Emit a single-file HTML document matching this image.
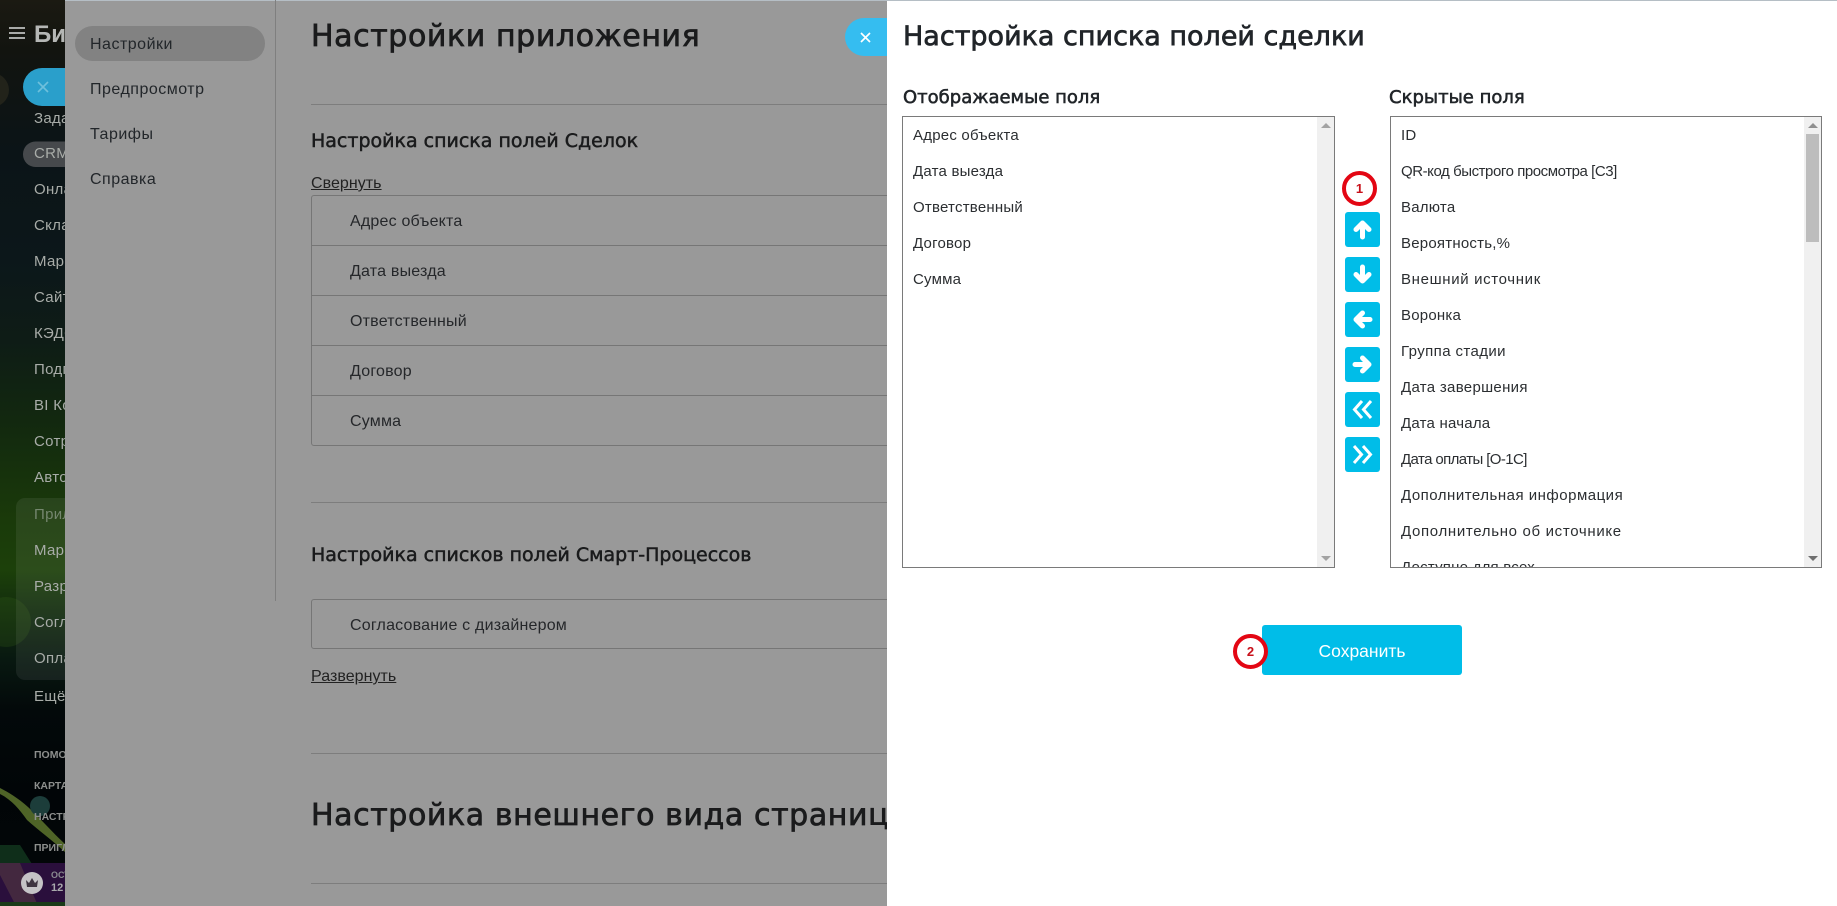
<!DOCTYPE html>
<html lang="ru">
<head>
<meta charset="utf-8">
<title>Настройка списка полей сделки</title>
<style>
html,body{margin:0;padding:0;width:1837px;height:906px;overflow:hidden;background:#999}
*{box-sizing:border-box}
body{font-family:"Liberation Sans",Arial,sans-serif;position:relative}
.a{position:absolute;white-space:nowrap}
#side{position:absolute;left:0;top:0;width:65px;height:906px;overflow:hidden;
background:linear-gradient(180deg,#1b1a12 0,#12140f 50px,#0b1417 150px,#0c171a 260px,#0e1c16 340px,#12280f 420px,#1a3a0a 520px,#1c400a 570px,#10280e 620px,#081810 660px,#03090a 710px,#010507 790px,#020608 860px)}
.s{position:absolute;left:34px;font-size:15px;line-height:20px;color:#a8aca8;white-space:nowrap;letter-spacing:.3px}
.t{position:absolute;left:34px;font-size:10.5px;line-height:14px;font-weight:700;color:#8d8f8d;white-space:nowrap}
#gray{position:absolute;left:65px;top:0;width:822px;height:906px;background:#999;overflow:hidden;color:#1a1b1c}
.m{position:absolute;left:25px;font-size:16px;line-height:22px;color:#22262a;letter-spacing:.5px}
.hr{position:absolute;left:246px;right:0;height:1px;background:#7d7d7d}
.h1{position:absolute;left:246px;font-family:"DejaVu Sans",sans-serif;font-size:30px;line-height:40px;white-space:nowrap;-webkit-text-stroke:.75px #1a1b1c;letter-spacing:.6px}
.h2{position:absolute;left:246px;font-family:"DejaVu Sans",sans-serif;font-size:19px;line-height:26px;white-space:nowrap;-webkit-text-stroke:.5px #1a1b1c;letter-spacing:0}
.l{position:absolute;left:246px;font-size:16px;line-height:20px;text-decoration:underline;color:#222;letter-spacing:.05px}
.box{position:absolute;left:246px;width:600px;border:1px solid #767676;border-radius:3px}
.row{height:50px;line-height:51px;padding-left:38px;font-size:16px;color:#25272a;border-bottom:1px solid #767676;letter-spacing:.2px}
.row:last-child{border-bottom:0}
#panel{position:absolute;left:887px;top:1px;width:950px;height:905px;background:#fff;color:#212529}
.ph{position:absolute;font-family:"DejaVu Sans",sans-serif;white-space:nowrap;font-size:18px;line-height:24px;-webkit-text-stroke:.55px #212529}
.lb{position:absolute;border:1px solid #7a7a7a;background:#fff;overflow:hidden;top:115px;height:452px}
.it{position:absolute;left:10px;font-size:15px;line-height:20px;color:#2b2e31;white-space:nowrap;letter-spacing:.22px}
.track{position:absolute;right:0;top:0;bottom:0;width:17px;background:#f0f0f0}
.thumb{position:absolute;left:2px;width:13px;top:17px;height:108px;background:#bdbdbd}
.up{position:absolute;left:3.5px;top:6px;width:0;height:0;border-left:5px solid transparent;border-right:5px solid transparent;border-bottom:5px solid #a3a3a3}
.dn{position:absolute;left:3.5px;bottom:6px;width:0;height:0;border-left:5px solid transparent;border-right:5px solid transparent;border-top:5px solid #a3a3a3}
.btn{position:absolute;left:458px;width:35px;height:35px;background:#00bde8;border-radius:3px}
.btn svg{display:block}
.num{position:absolute;width:35px;height:35px;border:4px solid #e30613;border-radius:50%;background:#fff;color:#c8101a;font-size:13px;font-weight:700;text-align:center;line-height:27px}
</style>
</head>
<body>
<div id="side">
  <svg class="a" style="left:0;top:0" width="65" height="906" viewBox="0 0 65 906">
    <circle cx="-8" cy="90" r="17" fill="#22231a"/>
    <circle cx="6" cy="622" r="25" fill="#3a6a1c" opacity=".22"/>
    <rect x="16" y="498" width="70" height="182" rx="9" fill="#fff" opacity=".07"/>
    <path d="M0 794 C12 800 20 810 27 820 C38 830 52 840 65 852 L65 844 C52 832 40 818 28 807 C18 798 8 792 0 788Z" fill="#4f6427"/>
    <circle cx="40" cy="806" r="10" fill="#1c3d3a"/>
    <path d="M0 845 L20 845 L32 864 L0 864Z" fill="#0f2e1a"/>
    <rect x="0" y="863" width="65" height="43" fill="#2a0f3c"/>
    <path d="M0 863 L20 863 L38 906 L16 906 L0 875Z" fill="#43283f"/>
    <rect x="0" y="902" width="65" height="4" fill="#1a3a18"/>
    <rect x="9" y="27" width="16" height="2" fill="#a8aaa8"/>
    <rect x="9" y="32" width="16" height="2" fill="#a8aaa8"/>
    <rect x="9" y="37" width="16" height="2" fill="#a8aaa8"/>
    <path d="M23 87 a19 19 0 0 1 19 -19 H65 V106 H42 a19 19 0 0 1 -19 -19Z" fill="#2a9fcb"/>
    <path d="M38 82 L48 92 M48 82 L38 92" stroke="#6fc0dc" stroke-width="1.6"/>
    <path d="M23 154 a12.5 12.5 0 0 1 12.5 -12.5 H65 V167 H35.500 a12.5 12.5 0 0 1 -12.5 -12.500Z" fill="#46494c"/>
    <circle cx="32" cy="883" r="11" fill="#c5c3c6"/>
    <path d="M26 880 L29 883 L32 878 L35 883 L38 880 L37 887 H27Z" fill="#3e3440"/>
  </svg>
  <div class="a" style="left:34px;top:21px;font-size:24px;line-height:28px;font-weight:700;color:#b5b7b5">Битрикс</div>
  <div class="s" style="top:109px">Задачи</div>
  <div class="s" style="top:144px">CRM</div>
  <div class="s" style="top:180px">Онлайн</div>
  <div class="s" style="top:216px">Склад</div>
  <div class="s" style="top:252px">Маркет</div>
  <div class="s" style="top:288px">Сайты</div>
  <div class="s" style="top:324px">КЭДО</div>
  <div class="s" style="top:360px">Подпись</div>
  <div class="s" style="top:396px">BI Конст</div>
  <div class="s" style="top:432px">Сотрудн</div>
  <div class="s" style="top:468px">Автомат</div>
  <div class="s" style="top:505px;color:#75876f">Прилож</div>
  <div class="s" style="top:541px">Маркет</div>
  <div class="s" style="top:577px">Разраб</div>
  <div class="s" style="top:613px">Соглас</div>
  <div class="s" style="top:649px">Оплата</div>
  <div class="s" style="top:687px">Ещё</div>
  <div class="t" style="top:748px">ПОМОЩЬ</div>
  <div class="t" style="top:779px">КАРТА</div>
  <div class="t" style="top:810px">НАСТРОЙ</div>
  <div class="t" style="top:841px">ПРИГЛАС</div>
  <div class="t" style="left:51px;top:868px;font-size:9px;color:#8a8a90">ОСТАЛОСЬ</div>
  <div class="t" style="left:51px;top:881px;font-size:11px;color:#a9a9ad">12 ДНЕЙ</div>
</div>

<div id="gray">
  <div style="position:absolute;left:0;top:0;right:0;height:1px;background:#b5bec5"></div>
  <div style="position:absolute;left:10px;top:26px;width:190px;height:35px;border-radius:18px;background:#828282"></div>
  <div class="m" style="top:34px">Настройки</div>
  <div class="m" style="top:79px">Предпросмотр</div>
  <div class="m" style="top:124px">Тарифы</div>
  <div class="m" style="top:169px">Справка</div>
  <div style="position:absolute;left:210px;top:0;width:1px;height:601px;background:#7f7f7f"></div>

  <div class="h1" style="top:17px">Настройки приложения</div>
  <div class="hr" style="top:104px"></div>
  <div class="h2" style="top:128px">Настройка списка полей Сделок</div>
  <div class="l" style="top:174px">Свернуть</div>
  <div class="box" style="top:195px;height:251px">
    <div class="row">Адрес объекта</div>
    <div class="row">Дата выезда</div>
    <div class="row">Ответственный</div>
    <div class="row">Договор</div>
    <div class="row">Сумма</div>
  </div>
  <div class="hr" style="top:502px"></div>
  <div class="h2" style="top:542px">Настройка списков полей Смарт-Процессов</div>
  <div class="box" style="top:599px;height:50px"><div class="row">Согласование с дизайнером</div></div>
  <div class="l" style="top:667px">Развернуть</div>
  <div class="hr" style="top:753px"></div>
  <div class="h1" style="top:796px">Настройка внешнего вида страницы</div>
  <div class="hr" style="top:883px"></div>

  <div style="position:absolute;left:780px;top:18px;width:60px;height:38px;border-radius:19px 0 0 19px;background:#35bdf0"></div>
  <svg class="a" style="left:794px;top:31px" width="13" height="13" viewBox="0 0 13 13"><path d="M2 2 L11 11 M11 2 L2 11" stroke="#fff" stroke-width="1.7"/></svg>
</div>

<div style="position:absolute;left:887px;top:0;width:950px;height:1px;background:#b5bec5"></div>
<div id="panel">
  <div class="ph" style="left:16px;top:18px;font-size:27px;line-height:36px;-webkit-text-stroke:.7px #212529">Настройка списка полей сделки</div>
  <div class="ph" style="left:16px;top:85px">Отображаемые поля</div>
  <div class="ph" style="left:502px;top:85px">Скрытые поля</div>

  <div class="lb" style="left:15px;width:433px">
    <div class="it" style="top:9px">Адрес объекта</div>
    <div class="it" style="top:45px">Дата выезда</div>
    <div class="it" style="top:81px">Ответственный</div>
    <div class="it" style="top:117px">Договор</div>
    <div class="it" style="top:153px">Сумма</div>
    <div class="track"><div class="up"></div><div class="dn"></div></div>
  </div>

  <div class="lb" style="left:503px;width:432px">
    <div class="it" style="top:9px">ID</div>
    <div class="it" style="top:45px;letter-spacing:-.44px">QR-код быстрого просмотра [С3]</div>
    <div class="it" style="top:81px">Валюта</div>
    <div class="it" style="top:117px">Вероятность,%</div>
    <div class="it" style="top:153px;letter-spacing:.65px">Внешний источник</div>
    <div class="it" style="top:189px">Воронка</div>
    <div class="it" style="top:225px;letter-spacing:.4px">Группа стадии</div>
    <div class="it" style="top:261px;letter-spacing:.3px">Дата завершения</div>
    <div class="it" style="top:297px">Дата начала</div>
    <div class="it" style="top:333px;letter-spacing:-.6px">Дата оплаты [О-1С]</div>
    <div class="it" style="top:369px;letter-spacing:.5px">Дополнительная информация</div>
    <div class="it" style="top:405px;letter-spacing:.67px">Дополнительно об источнике</div>
    <div class="it" style="top:441px">Доступно для всех</div>
    <div class="track"><div class="up" style="border-bottom-color:#8f8f8f"></div><div class="thumb"></div><div class="dn" style="border-top-color:#6f6f6f"></div></div>
  </div>

  <div class="num" style="left:455px;top:170px">1</div>
  <div class="btn" style="top:211px"><svg width="35" height="35" viewBox="0 0 35 35"><path d="M17.500 25 V12 M11 17.500 L17.500 11 L24 17.500" fill="none" stroke="#fff" stroke-width="5" stroke-linecap="round" stroke-linejoin="round"/></svg></div>
  <div class="btn" style="top:256px"><svg width="35" height="35" viewBox="0 0 35 35"><path d="M17.500 10 V23 M11 17.500 L17.500 24 L24 17.500" fill="none" stroke="#fff" stroke-width="5" stroke-linecap="round" stroke-linejoin="round"/></svg></div>
  <div class="btn" style="top:301px"><svg width="35" height="35" viewBox="0 0 35 35"><path d="M25 17.500 H12 M17.500 11 L11 17.500 L17.500 24" fill="none" stroke="#fff" stroke-width="5" stroke-linecap="round" stroke-linejoin="round"/></svg></div>
  <div class="btn" style="top:346px"><svg width="35" height="35" viewBox="0 0 35 35"><path d="M10 17.500 H23 M17.500 11 L24 17.500 L17.500 24" fill="none" stroke="#fff" stroke-width="5" stroke-linecap="round" stroke-linejoin="round"/></svg></div>
  <div class="btn" style="top:391px"><svg width="35" height="35" viewBox="0 0 35 35"><path d="M17 9 L9.500 17.500 L17 26 M26 9 L18.500 17.500 L26 26" fill="none" stroke="#fff" stroke-width="3"/></svg></div>
  <div class="btn" style="top:436px"><svg width="35" height="35" viewBox="0 0 35 35"><path d="M9 9 L16.500 17.500 L9 26 M18 9 L25.500 17.500 L18 26" fill="none" stroke="#fff" stroke-width="3"/></svg></div>

  <div class="a" style="left:375px;top:624px;width:200px;height:50px;background:#00bde8;border-radius:3px;color:#fff;font-size:17.500px;line-height:52px;text-align:center">Сохранить</div>
  <div class="num" style="left:346px;top:633px">2</div>
</div>
</body>
</html>
